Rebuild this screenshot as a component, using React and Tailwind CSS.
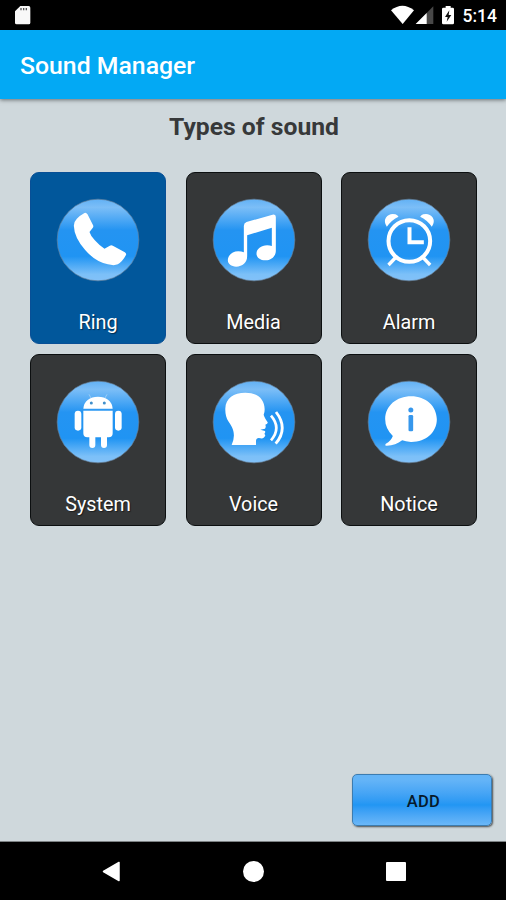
import React from 'react';

const white = '#ffffff';

function Disc({ id, children }) {
  return (
    <svg width="84" height="84" viewBox="0 0 252 252" className="mt-[25px] block shrink-0">
      <defs>
        <linearGradient id={id} x1="0" y1="0" x2="0" y2="1">
          <stop offset="0" stopColor="#62b1f5" />
          <stop offset="0.1" stopColor="#7cbef7" />
          <stop offset="0.38" stopColor="#2494f2" />
          <stop offset="0.7" stopColor="#2094f3" />
          <stop offset="0.92" stopColor="#7cc0f8" />
          <stop offset="1" stopColor="#82c1f8" />
        </linearGradient>
      </defs>
      <circle cx="126" cy="126" r="122.5" fill={`url(#${id})`} stroke="#66829c" strokeWidth="2" />
      {children}
    </svg>
  );
}

/* Each glyph is drawn on a 465-unit card grid and shifted onto its disc. */
const Ring = () => (
  <g transform="translate(-108.5 -98)">
    <path
      d="M194 143 Q199 141 203 147 L219 178 Q222 183 219 187 L209 200 Q213 213 225 225 Q238 240 254 250 L270 241 Q274 239 279 241 L315 261 Q321 265 318 270 Q308 289 294 297 Q283 302 264 297 Q226 289 196 254 Q163 216 162 181 Q162 169 171 160 Q181 150 194 143Z"
      fill={white}
    />
  </g>
);

const Media = () => (
  <g transform="translate(-107.5 -97)">
    <path
      d="M203 181 Q203 172 211 169 L289 147 Q299 144 299 154 L299 255 C299 272 286 284 268 284 C252 284 241 276 241 264 C241 250 255 239 273 239 Q281 239 287 241 L287 186 L213 209 L213 272 C213 290 199 303 180 303 C165 303 155 295 155 284 C155 269 169 257 186 257 Q196 257 203 260Z"
      fill={white}
    />
  </g>
);

const Alarm = () => (
  <g transform="translate(-105.5 -97)" fill="none" stroke={white}>
    <circle cx="232.500" cy="226" r="62.500" strokeWidth="12" />
    <path d="M233 185 V230 H276" strokeWidth="12" />
    <path d="M190 277 L170 298 M275 277 L295 298" strokeWidth="10" />
    <path d="M165 183 Q155 168 162 156 Q173 141 191 146 Q197 148 200 153 Q180 162 165 183Z" fill={white} stroke="none" />
    <path d="M300 183 Q310 168 303 156 Q292 141 274 146 Q268 148 265 153 Q285 162 300 183Z" fill={white} stroke="none" />
  </g>
);

const System = () => (
  <g transform="translate(-108 -95)" fill={white}>
    <path d="M190 181 Q191 164 204 154 Q215 145 234 145 Q253 145 264 154 Q277 164 278 181Z" />
    <path d="M207 138 L213 149 M261 138 L255 149" stroke="#b7dbf8" strokeWidth="2" />
    <circle cx="214" cy="164" r="4.500" fill="#3f8fcb" />
    <circle cx="253" cy="164" r="4.500" fill="#3f8fcb" />
    <path d="M190 187 H278 V255 Q278 267 266 267 H261 V290 Q261 299 252 299 Q243 299 243 290 V267 H226 V290 Q226 299 217 299 Q208 299 208 290 V267 H202 Q190 267 190 255Z" />
    <rect x="164" y="187" width="20" height="60" rx="10" />
    <rect x="285" y="187" width="20" height="60" rx="10" />
  </g>
);

const Voice = () => (
  <g transform="translate(-107 -95)">
    <path
      d="M166 290 Q176 268 171 248 Q168 236 156 219 Q146 203 147 180 C148 150 172 133 207 133 C244 133 264 151 265 183 Q265 194 262 199 Q264 207 274 222 Q275 226 267 229 Q270 236 266 241 L252 244 L266 248 Q268 253 264 256 L267 261 Q264 272 252 270 Q240 267 239 278 L239 290Z"
      fill={white}
    />
    <path d="M284 202 Q316 239 284 276" fill="none" stroke={white} strokeWidth="8" />
    <path d="M299 191 Q337 240 298 286" fill="none" stroke={white} strokeWidth="8.500" />
  </g>
);

const Notice = () => (
  <g transform="translate(-105.5 -95)">
    <path
      d="M183 263 Q160 241 160 212 C161 172 194 144 238 144 C282 144 314 173 315 213 C315 253 281 282 237 281 Q221 280 211 276 C197 287 180 293 162 292 Q158 290 162 286 Q178 278 183 263Z"
      fill={white}
    />
    <circle cx="237" cy="185" r="7.500" fill="#3697ec" />
    <rect x="230" y="200" width="14" height="49" rx="4" fill="#3697ec" />
  </g>
);

const sounds = [
  { label: 'Ring', Glyph: Ring, active: true },
  { label: 'Media', Glyph: Media },
  { label: 'Alarm', Glyph: Alarm },
  { label: 'System', Glyph: System },
  { label: 'Voice', Glyph: Voice },
  { label: 'Notice', Glyph: Notice },
];

function SoundCard({ label, Glyph, active }) {
  return (
    <button
      className={`flex h-[172px] flex-col items-center rounded-[9px] border-[1.5px] ${
        active ? 'border-[#084f96] bg-[#01579b]' : 'border-[#0c0f10] bg-[#353738]'
      }`}
    >
      <Disc id={`disc-${label}`}>
        <Glyph />
      </Disc>
      <span className="mt-[29.5px] text-[19.8px] leading-6 text-white [text-shadow:1px_1px_1px_rgba(0,0,0,0.5)]">{label}</span>
    </button>
  );
}

function StatusBar() {
  return (
    <div className="flex h-[30px] shrink-0 items-center justify-between bg-black pr-[9px] pl-[15px]">
      <svg width="16" height="20" viewBox="0 0 48 60">
        <path d="M16 3 H41 Q46 3 46 8 V53 Q46 58 41 58 H5 Q0 58 0 53 V19Z" fill="#f8f8f8" />
        <path d="M18 9 v7 M26 9 v7 M34 9 v7" stroke="#555" strokeWidth="4" />
      </svg>
      <div className="flex items-center">
        <svg width="66" height="20" viewBox="0 0 198 60">
          <path d="M0 16 Q34 -11 69 16 L35 57Z" fill={white} />
          <path d="M127 4 V57 H74Z" fill="#484848" />
          <path d="M107 24 V57 H74Z" fill={white} />
          <path d="M164 3 H179 V8 H185 Q189 8 189 12 V54 Q189 58 185 58 H157 Q153 58 153 54 V12 Q153 8 157 8 H164Z" fill={white} />
          <path d="M175 16 L162 36 H170 L167 50 L181 30 H173Z" fill="#111" />
        </svg>
        <span className="ml-[6px] pt-[3px] text-[17.5px] leading-none font-medium text-white">5:14</span>
      </div>
    </div>
  );
}

export default function App() {
  return (
    <div className="flex h-[900px] w-[506px] flex-col overflow-hidden bg-[#cfd8dc] font-['Roboto',sans-serif]">
      <StatusBar />
      <header className="z-10 flex h-[69px] shrink-0 items-center bg-[#03a9f4] pt-[2px] pl-5 shadow-[0_1px_4px_rgba(0,0,0,0.5)]">
        <h1 className="text-[24.8px] leading-8 font-medium text-white">Sound Manager</h1>
      </header>
      <main className="flex grow flex-col border-b border-[#7d8284]">
        <h2 className="mt-[12px] ml-[2px] text-center text-[24.7px] leading-8 font-bold text-[#37393a]">Types of sound</h2>
        <div className="mt-[28.500px] mr-[29px] ml-[30px] grid grid-cols-3 gap-x-[19.5px] gap-y-[10px]">
          {sounds.map((s) => (
            <SoundCard key={s.label} {...s} />
          ))}
        </div>
        <button className="mt-auto mr-[14px] mb-[15px] h-[52px] w-[140px] self-end rounded-[5px] border border-[#3c7cb0] bg-linear-to-b from-[#64b4f7] from-10% via-[#2196f3] via-60% to-[#6ab7f8] pt-[5px] pl-[3px] text-[16.5px] tracking-[0.3px] font-medium text-[#071a2c] shadow-[1px_1px_2px_rgba(0,0,0,0.65)]">
          ADD
        </button>
      </main>
      <nav className="flex h-[58px] shrink-0 items-center justify-between bg-black pr-[100px] pl-[102px]">
        <svg width="18" height="21" viewBox="0 0 18 21">
          <path d="M17 1.500 V19.500 L1.500 10.500Z" fill={white} stroke={white} strokeWidth="1.500" strokeLinejoin="round" />
        </svg>
        <div className="h-[21px] w-[21px] rounded-full bg-white" />
        <div className="h-[19px] w-5 rounded-[1px] bg-white" />
      </nav>
    </div>
  );
}
